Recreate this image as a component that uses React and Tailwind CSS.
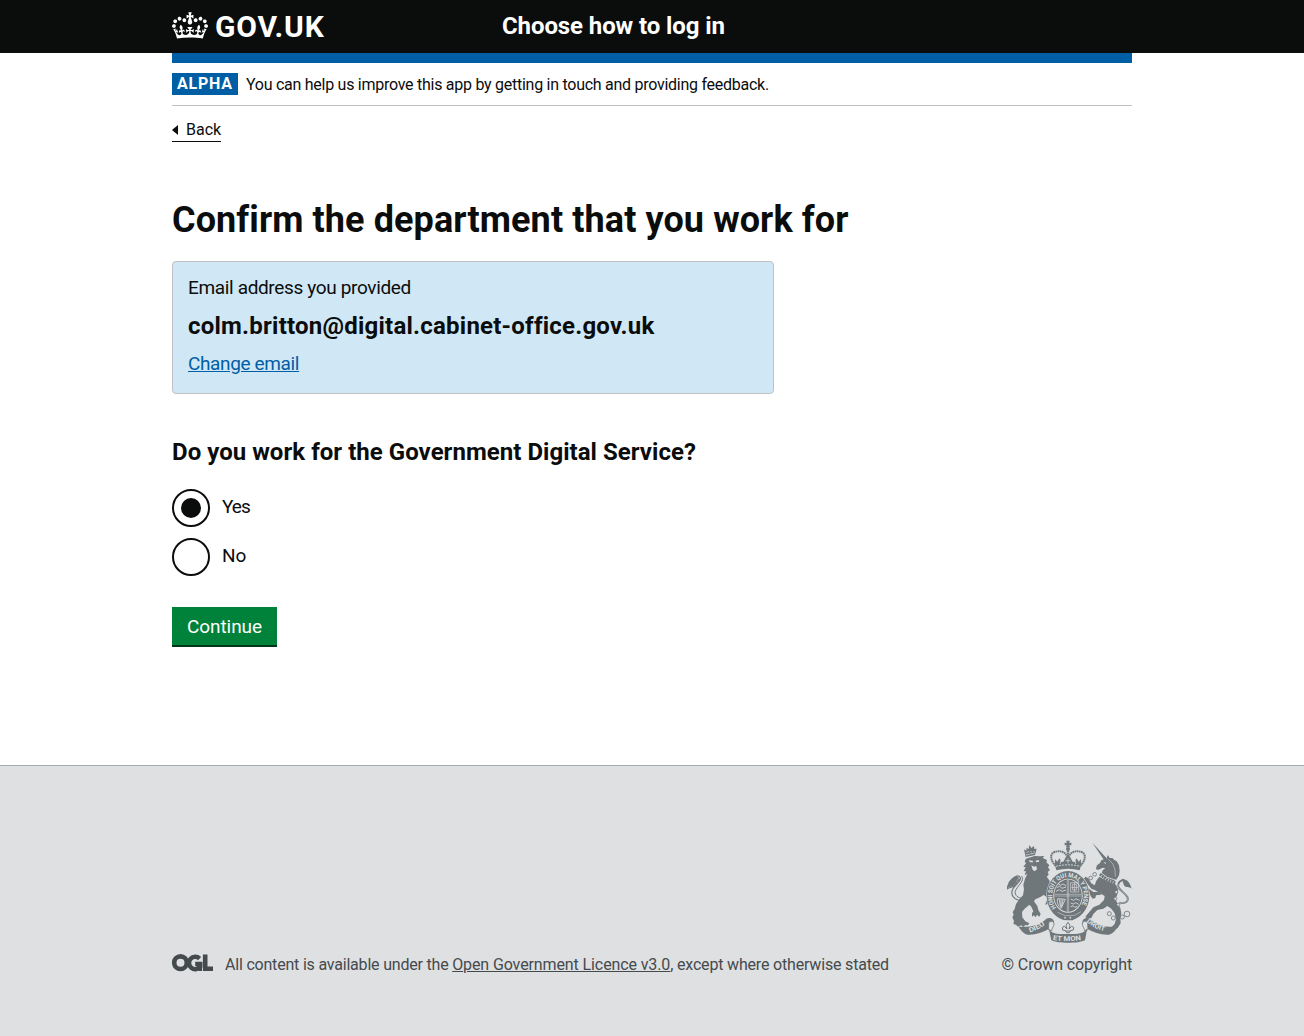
function CrownLogo() {
  return (
    <svg className="h-[27px] w-9 fill-white" viewBox="0 0 132 97" aria-hidden="true">
      <path
        fillRule="evenodd"
        d="M25 30.2c3.5 1.5 7.7-.2 9.1-3.7 1.5-3.6-.2-7.8-3.9-9.2-3.6-1.4-7.6.3-9.1 3.9-1.4 3.5.3 7.5 3.9 9zM9 39.5c3.6 1.5 7.8-.2 9.2-3.7 1.5-3.6-.2-7.8-3.9-9.1-3.6-1.5-7.6.2-9.1 3.8-1.4 3.5.3 7.5 3.8 9zM4.4 57.2c3.5 1.5 7.7-.2 9.1-3.8 1.5-3.6-.2-7.7-3.9-9.1-3.5-1.5-7.6.3-9.1 3.8-1.4 3.5.3 7.6 3.9 9.1zm38.3-21.4c3.5 1.5 7.7-.2 9.1-3.8 1.5-3.6-.2-7.7-3.9-9.1-3.6-1.5-7.6.3-9.1 3.8-1.3 3.6.4 7.7 3.9 9.1zm64.4-5.6c-3.6 1.5-7.8-.2-9.1-3.7-1.5-3.6.2-7.8 3.8-9.2 3.6-1.4 7.7.3 9.2 3.9 1.3 3.5-.4 7.5-3.9 9zm15.9 9.3c-3.6 1.5-7.7-.2-9.1-3.7-1.5-3.6.2-7.8 3.7-9.1 3.6-1.5 7.7.2 9.2 3.8 1.5 3.5-.3 7.5-3.8 9zm4.7 17.7c-3.6 1.5-7.8-.2-9.2-3.8-1.5-3.6.2-7.7 3.9-9.1 3.6-1.5 7.7.3 9.2 3.8 1.3 3.5-.4 7.6-3.9 9.1zM89.3 35.8c-3.6 1.5-7.8-.2-9.2-3.8-1.4-3.6.2-7.7 3.9-9.1 3.6-1.5 7.7.3 9.2 3.8 1.4 3.6-.3 7.7-3.9 9.1zM69.7 17.7l8.9 4.7V9.3l-8.9 2.8c-.2-.3-.5-.6-.9-.9L72.4 0H59.6l3.5 11.2c-.3.3-.6.5-.9.9l-8.8-2.8v13.1l8.8-4.7c.3.3.6.7.9.9l-5 15.4v.1c-.2.8-.4 1.6-.4 2.4 0 4.1 3.1 7.5 7 8.1h.2c.3 0 .7.1 1 .1.4 0 .7 0 1-.1h.2c4-.6 7.1-4.1 7.1-8.1 0-.8-.1-1.7-.4-2.4V34l-5.1-15.4c.4-.2.7-.6 1-.9zM66 92.8c16.9 0 32.8 1.1 47.1 3.2 4-16.9 8.9-26.7 14-33.5l-9.6-3.4c1 4.9 1.1 7.2 0 10.2-1.5-1.4-3-4.3-4.2-8.7L108.6 76c2.8-2 5-3.2 7.5-3.3-4.4 9.4-10 11.9-13.6 11.2-4.3-.8-6.3-4.6-5.6-7.9 1-4.7 5.7-5.9 8-.5 4.3-8.7-3-11.4-7.6-8.8 7.1-7.2 7.9-13.5 2.1-21.1-8 6.1-8.1 12.3-4.5 20.8-4.7-5.4-12.1-2.5-9.5 6.2 3.4-5.2 7.9-2 7.2 3.1-.6 4.3-6.4 7.8-13.5 7.2-10.3-.9-10.9-8-11.2-13.8 2.5-.5 7.1 1.8 11 7.3L80.2 60c-4.1 4.4-8 5.3-12.3 5.4 1.4-4.4 8-11.6 8-11.6H55.5s6.4 7.2 7.9 11.6c-4.2-.1-8-1-12.3-5.4l1.4 16.4c3.9-5.5 8.5-7.7 10.9-7.3-.3 5.8-.9 12.8-11.1 13.8-7.2.6-12.9-2.9-13.5-7.2-.7-5 3.8-8.3 7.1-3.1 2.7-8.7-4.6-11.6-9.4-6.2 3.7-8.5 3.6-14.7-4.6-20.8-5.8 7.6-5 13.9 2.2 21.1-4.7-2.6-11.9.1-7.7 8.8 2.3-5.5 7.1-4.2 8.1.5.7 3.3-1.3 7.1-5.7 7.9-3.5.7-9-1.8-13.5-11.2 2.5.1 4.7 1.3 7.5 3.3l-4.7-15.4c-1.2 4.4-2.7 7.2-4.3 8.7-1.1-3-.9-5.3 0-10.2l-9.5 3.4c5 6.9 9.9 16.7 14 33.5 14.8-2.1 30.8-3.2 47.7-3.2z"
      />
    </svg>
  );
}

const ink = "#6f777b";
const paper = "#dee0e2";

function Lion() {
  return (
    <g>
      <path d="M60 40l7 4 1-9 6 5 2-13 6 9 8-6 1 9 7-1-5 19-28 6z" />
      <path d="M67 50l8-4M79 46l5 3M89 45l3 4M66 57l26-6" stroke={paper} strokeWidth="2" fill="none" />
      <path d="M66 68L92 60 106 61 121 60 116 66 129 72 127 79 136 88 132 94 138 103 131 107 134 116 128 122 136 133 139 144 134 152 126 164 120 176 108 184 94 190 90 196 100 210 103 222 110 234 106 242 99 236 95 244 90 238 84 242 84 232 88 226 82 212 76 206 62 218 54 228 55 244 64 256 76 262 72 268 64 267 58 273 52 268 42 272 36 266 28 264 30 255 25 244 29 236 26 228 32 219 36 204 46 190 57 178 60 160 58 146 63 128 70 114 62 117 66 106 59 105 65 94 58 92 66 82 62 76z" />
      <path d="M112 144L128 156 142 176 150 196 150 208 143 203 138 212 132 204 124 206 127 196 134 193 124 180 110 172z" />
      <path d="M74 73l12 1 2 5-10 0zM94 74l10-2 2 5-9 2zM82 88l8 4 7-2 2 10-7 6-6-5z" fill={paper} />
      <path d="M50 194C30 191 17 176 27 158 36 144 56 132 47 122 40 115 30 124 22 132 14 138 11 146 10 158 18 152 28 156 34 146 38 138 40 132 46 130" fill="none" stroke={ink} strokeWidth="3.5" />
      <path d="M38 120C22 124 14 138 10 156 18 150 28 154 33 145 38 138 36 132 46 126z" />
      <path d="M52 187C38 184 29 174 36 161 44 146 62 134 53 120" fill="none" stroke={ink} strokeWidth="3" />
    </g>
  );
}

function Unicorn() {
  return (
    <g>
      <path d="M265 20l42 46-7 6z" />
      <path d="M276 97L279 88 288 81 292 73 300 70 304 64 307 68 312 57 317 66 325 66 331 72 338 76 345 88 347 104 345 118 338 130 328 136 310 127 292 115 296 103 304 97 296 95 284 101 278 101z" />
      <path d="M300 79l6 2-3 2zM313 70l14 14 6 18 1 20" fill="none" stroke={paper} strokeWidth="1.5" />
      <path d="M288 114L308 131 334 141" fill="none" stroke={ink} strokeWidth="9" strokeDasharray="6 2" />
      <path d="M287 107L309 124 337 133" fill="none" stroke={paper} strokeWidth="2.5" />
      <path d="M286 122L310 136 336 146 342 160 340 176 334 188 340 202 349 216 352 232 349 246 350 262 341 276 328 282 320 276 332 264 336 250 332 232 322 218 310 210 298 218 280 222 268 234 262 246 250 248 244 242 258 226 268 214 286 206 300 192 302 180 288 172 272 162 262 158 248 140 240 128 244 122 252 126 262 142 272 148 277 134z" />
      <path d="M288 168L268 168 252 156 245 144 240 148 244 160 256 170 260 180 266 188 274 186 276 178 292 176z" />
      <g fill={paper} stroke={ink} strokeWidth="2.5">
        <circle cx="272" cy="115" r="5.5" />
        <circle cx="260" cy="126" r="5.5" />
        <circle cx="337" cy="168" r="4.5" />
        <circle cx="334" cy="188" r="4.5" />
        <circle cx="343" cy="206" r="4.5" />
      </g>
      <g fill="none" stroke={ink}>
        <path d="M346 200C363 204 376 196 370 183 363 168 337 160 343 144 348 130 360 130 368 140" strokeWidth="5.5" />
        <g strokeWidth="2.5">
          <circle cx="316" cy="233" r="6" />
          <circle cx="328" cy="246" r="6" />
          <circle cx="342" cy="233" r="6" />
          <circle cx="355" cy="243" r="6" />
          <circle cx="369" cy="234" r="8.5" />
        </g>
      </g>
      <path d="M346 200C363 204 376 196 370 183 363 168 337 160 343 144" fill="none" stroke={paper} strokeWidth="1.2" />
      <path d="M352 128C368 128 378 138 383 158 375 150 366 158 360 148 356 140 358 134 352 128z" />
    </g>
  );
}

function CoatOfArms() {
  return (
    <svg className="h-[103px] w-[125px]" viewBox="51 30 375 309" fill={ink} aria-hidden="true">
      <defs>
        <path id="garter" d="M199 233A47.5 54.5 0 1 1 269 233" />
        <path id="dieu" d="M119 307 Q150 299 174 276" />
        <path id="mon" d="M188 329 Q234 338 280 328" />
        <path id="droit" d="M289 275 Q315 299 354 307" />
      </defs>

      <g transform="translate(42 18)">
        <Lion />
        <Unicorn />
      </g>

      {/* crown */}
      <path d="M229 32h10l-1 7 6-1v8l-6-1 2 7h-12l2-7-6 1v-8l6 1z" />
      <circle cx="234" cy="57" r="6" />
      <g fill="none" stroke={ink}>
        <path d="M197 107c-15-14-19-35-4-41 15-5 32-1 36 10M271 107c15-14 19-35 4-41-15-5-32-1-36 10" strokeWidth="6" strokeDasharray="5 1.5" />
        <path d="M234 62v44" strokeWidth="7" strokeDasharray="5 1.5" />
      </g>
      <path d="M194 102l2-15 5 8 8-10 4 11 7-1 8-15 6-8 6 8 8 15 7 1 4-11 8 10 5-8 2 15-5 19c-23-6-47-6-70 0z" />
      <path d="M198 109c23-6 49-6 72 0" fill="none" stroke={paper} strokeWidth="2.5" strokeDasharray="6 3" />
      <path d="M211 93v9M257 93v9M227 92h14M234 85v15" stroke={paper} strokeWidth="2" />

      {/* garter and shield */}
      <ellipse cx="234" cy="197" rx="65" ry="76" fill={paper} />
      <ellipse cx="234" cy="197" rx="64" ry="74" />
      <ellipse cx="234" cy="197" rx="44" ry="51" fill={paper} />
      <ellipse cx="234" cy="197" rx="41.5" ry="48.5" />
      <g fill="none" stroke={paper} strokeWidth="2.5">
        <path d="M232 149v96M236 149v96M194 193h80M194 198h80" strokeWidth="1.5" />
        <path d="M204 161l8 5 7-4 9 5M200 173l9-4 7 6 12-4M198 184l10-5 8 5 12-4" />
        <path d="M242 158h24v28h-24zM248 163h12v17h-12zM254 159v26M244 172h21" strokeWidth="2" />
        <path d="M242 207l9 4 7-5 11 5M242 219l8 3 7-4 9 5M242 231l7-4 6 5 7-3" />
        <path d="M203 206c-3 10 1 23 10 29l13-27zM208 208l3 21M213 208v23M219 208l-4 22" strokeWidth="2.5" />
      </g>
      <text fill={paper} className="font-bold" fontFamily="Roboto, sans-serif" fontSize="19">
        <textPath href="#garter" textLength="228" lengthAdjust="spacingAndGlyphs">HONI SOIT QUI MAL Y PENSE</textPath>
      </text>
      <path d="M202 245l24 10 28-1 20-11-5 15-22 13-27-2-20-12z" />
      <path d="M203 247l23 10 28-1 19-11" fill="none" stroke={paper} strokeWidth="1.5" />
      <circle cx="225" cy="263" r="2.5" fill={paper} />
      <circle cx="241" cy="263" r="2.5" fill={paper} />

      {/* motto ribbons */}
      <path d="M86 290c35 3 64-5 83-24 11-5 22 0 23 9 2 10-8 12-12 20-23 14-47 21-68 19-13-4-20-14-26-24z" />
      <path d="M383 290c-35 3-64-5-83-24-11-5-22 0-23 9-2 10 8 12 12 20 23 14 47 21 68 19 13-4 20-14 26-24z" />
      <path d="M176 280c2-7 11-8 15-2 4 9-5 14-6 24l-10-3zM293 280c-2-7-11-8-15-2-4 9 5 14 6 24l10-3z" fill={paper} stroke={ink} strokeWidth="2.5" />
      <path d="M176 294c8 18 21 18 56 18s50 0 60-18l-7 37c-19 10-83 10-101 0z" />
      <g fill={paper} className="font-bold" fontFamily="Roboto, sans-serif" fontSize="20">
        <text><textPath href="#dieu" textLength="52" lengthAdjust="spacingAndGlyphs">DIEU</textPath></text>
        <text><textPath href="#mon" textLength="86" lengthAdjust="spacingAndGlyphs">ET MON</textPath></text>
        <text><textPath href="#droit" textLength="62" lengthAdjust="spacingAndGlyphs">DROIT</textPath></text>
      </g>
      <path d="M234 277l6 9-3 11 8-8 6 3-1 8-9 2-3 6h-8l-3-6-9-2-1-8 6-3 8 8-3-11zM226 303h17" fill={paper} stroke={ink} strokeWidth="3" />
    </svg>
  );
}

function OglLogo() {
  return (
    <svg className="-mt-px h-[18px] w-[41px]" viewBox="0 0 41 18" fill="none" stroke="#454a4d" aria-hidden="true">
      <circle cx="8.5" cy="8.7" r="6.3" strokeWidth="4.6" />
      <path d="M27.6 4.6A6.2 6.2 0 1 0 28.2 12.7V10.1h-5" strokeWidth="4.5" />
      <path d="M28.2 10.2v6.8" strokeWidth="3.6" />
      <path d="M33.2 .4v14.4H41" strokeWidth="4.6" />
    </svg>
  );
}

function Radio({ label, checked, tracking }) {
  return (
    <label className="flex h-[38px] items-center gap-3">
      <span className="flex size-[38px] items-center justify-center rounded-full border-2 border-[#0b0c0c] bg-white">
        {checked && <span className="size-5 rounded-full bg-[#0b0c0c]" />}
      </span>
      <span className={`pb-[3px] text-[19px] leading-[25px] ${tracking}`}>{label}</span>
    </label>
  );
}

export default function App() {
  return (
    <div className="flex h-[1036px] flex-col overflow-hidden bg-white font-['Roboto',sans-serif] text-[#0b0c0c] antialiased">
      <header className="h-[53px] shrink-0 bg-[#0b0c0c] text-white">
        <div className="mx-auto flex h-full w-[960px]">
          <a className="flex w-[330px] items-start gap-[7px] pt-3">
            <CrownLogo />
            <span className="text-[30px] leading-[30px] font-bold tracking-[0.8px]">GOV.UK</span>
          </a>
          <span className="pt-[11px] text-2xl leading-[30px] font-bold tracking-[-0.1px]">Choose how to log in</span>
        </div>
      </header>

      <div className="mx-auto w-[960px] grow">
        <div className="h-2.5 bg-[#005ea5]" />
        <div className="flex h-[43px] items-center gap-2 border-b border-[#bfc1c3]">
          <strong className="h-[22px] w-[66px] bg-[#005ea5] pl-[5px] text-base leading-[22px] font-bold tracking-[0.8px] text-white">ALPHA</strong>
          <span className="pt-px text-base leading-5 tracking-[-0.265px]">You can help us improve this app by getting in touch and providing feedback.</span>
        </div>
        <a className="mt-[14px] flex h-[22px] w-[49px] items-start border-b border-[#0b0c0c]">
          <span className="mt-[5px] mr-2 border-y-[5px] border-r-[6px] border-y-transparent border-r-[#0b0c0c]" />
          <span className="text-base leading-5">Back</span>
        </a>

        <main>
          <h1 className="mt-[58px] text-4xl leading-10 font-bold tracking-[0.1px]">Confirm the department that you work for</h1>
          <section className="mt-[21px] h-[133px] w-[602px] rounded border border-[#bfc1c3] bg-[#d0e7f5] px-[15px] pt-[13px]">
            <p className="text-[19px] leading-[25px] tracking-[-0.35px]">Email address you provided</p>
            <p className="mt-[11px] text-2xl leading-[30px] font-bold tracking-[0.23px]">colm.britton@digital.cabinet-office.gov.uk</p>
            <a className="mt-2.5 block text-[19px] leading-[25px] tracking-[-0.36px] text-[#005ea5] underline">Change email</a>
          </section>
          <h2 className="mt-[43px] text-2xl leading-[30px] font-bold tracking-[0.035px]">Do you work for the Government Digital Service?</h2>
          <div className="mt-[22px] flex flex-col gap-[11px]">
            <Radio label="Yes" checked tracking="tracking-[-1px]" />
            <Radio label="No" tracking="tracking-normal" />
          </div>
          <button className="mt-[31px] block h-10 w-[105px] border-b-2 border-[#003618] bg-[#00823b] pt-0.5 text-[19px] leading-9 tracking-[-0.08px] text-white">Continue</button>
        </main>
      </div>

      <footer className="h-[271px] shrink-0 border-t border-[#a1acb2] bg-[#dee0e2] pt-[74px] text-base text-[#454a4d]">
        <div className="mx-auto flex w-[960px] items-end justify-between">
          <div className="flex items-start gap-3">
            <OglLogo />
            <p className="leading-5 whitespace-pre">
              <span className="tracking-[-0.2px]">All content is available under the </span>
              <a className="tracking-[-0.11px] underline">Open Government Licence v3.0</a>
              <span className="tracking-[-0.18px]">, except where otherwise stated</span>
            </p>
          </div>
          <div className="flex flex-col items-end gap-3">
            <CoatOfArms />
            <span className="leading-5 tracking-[-0.12px]">© Crown copyright</span>
          </div>
        </div>
      </footer>
    </div>
  );
}
